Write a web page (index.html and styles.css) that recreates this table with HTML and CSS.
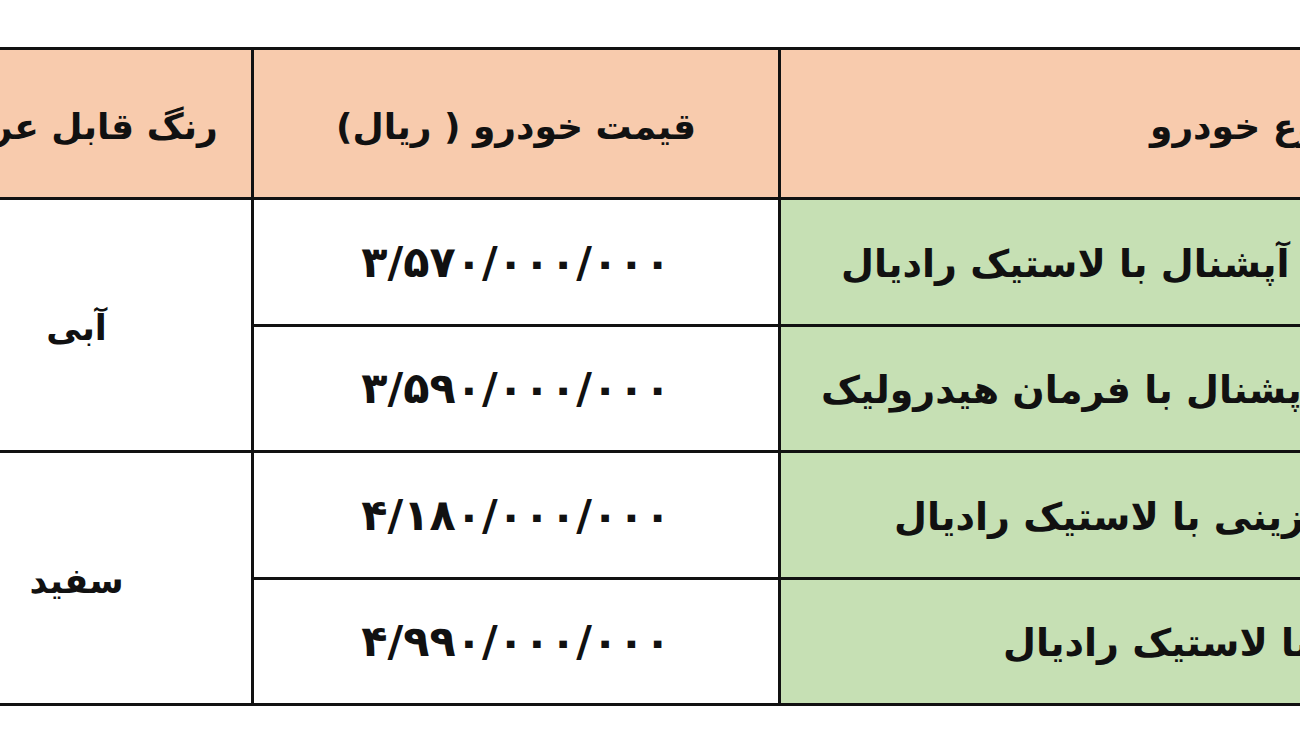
FILE: index.html
```html
<!DOCTYPE html>
<html lang="fa">
<head>
<meta charset="utf-8">
<title>قیمت خودرو</title>
<link rel="stylesheet" href="styles.css">
</head>
<body>
<div class="viewport">
  <table class="prices" dir="rtl">
    <colgroup>
      <col class="col-car">
      <col class="col-price">
      <col class="col-color">
    </colgroup>
    <thead>
      <tr class="head-row">
        <th class="cell head car-head">نوع خودرو</th>
        <th class="cell head">قیمت خودرو ( ریال)</th>
        <th class="cell head">رنگ قابل عرضه</th>
      </tr>
    </thead>
    <tbody>
      <tr class="row">
        <td class="cell car car-1">نیسان دوگانه سوز آپشنال با لاستیک رادیال</td>
        <td class="cell price"><span class="num" dir="ltr">۳/۵۷۰/۰۰۰/۰۰۰</span></td>
        <td class="cell color" rowspan="2">آبی</td>
      </tr>
      <tr class="row">
        <td class="cell car car-2">نیسان بنزینی آپشنال با فرمان هیدرولیک</td>
        <td class="cell price"><span class="num" dir="ltr">۳/۵۹۰/۰۰۰/۰۰۰</span></td>
      </tr>
      <tr class="row">
        <td class="cell car car-3">نیسان بنزینی با لاستیک رادیال</td>
        <td class="cell price"><span class="num" dir="ltr">۴/۱۸۰/۰۰۰/۰۰۰</span></td>
        <td class="cell color" rowspan="2">سفید</td>
      </tr>
      <tr class="row">
        <td class="cell car car-4">نیسان دیزلی با لاستیک رادیال</td>
        <td class="cell price"><span class="num" dir="ltr">۴/۹۹۰/۰۰۰/۰۰۰</span></td>
      </tr>
    </tbody>
  </table>
</div>
</body>
</html>
```

FILE: styles.css
```css
html, body {
  margin: 0;
  padding: 0;
  background: #ffffff;
}

.viewport {
  width: 1300px;
  height: 731px;
  overflow: hidden;
  padding-top: 47px;
  box-sizing: border-box;
}

.prices {
  margin-left: -101px;
  width: 1879px;
  table-layout: fixed;
  border-collapse: collapse;
  font-family: "DejaVu Sans", sans-serif;
  font-weight: bold;
  color: #111111;
}

.col-car { width: 1000px; }
.col-price { width: 527px; }
.col-color { width: 352px; }

.cell {
  border: 3px solid #111111;
  padding: 0;
  vertical-align: middle;
  white-space: nowrap;
  overflow: hidden;
  text-align: center;
}

.head-row { height: 150px; }
.row { height: 126.5px; }

.head {
  background: #f8cbad;
  font-size: 36px;
  padding-top: 6px;
}

.car-head {
  text-align: left;
  padding-left: 369px;
}

.car {
  background: #c6e0b4;
  font-size: 38px;
  text-align: left;
  padding-top: 4px;
}

.car-1 { padding-left: 60px; }
.car-2 { padding-left: 40px; }
.car-3 { padding-left: 113px; }
.car-4 { padding-left: 222px; }

.price {
  background: #ffffff;
  font-size: 43px;
}

.num {
  unicode-bidi: isolate;
}

.color {
  background: #ffffff;
  font-size: 35px;
  padding-top: 6px;
}
```
